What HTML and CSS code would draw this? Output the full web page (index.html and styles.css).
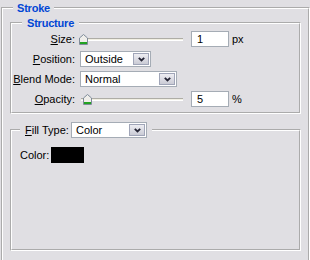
FILE: index.html
```html
<!DOCTYPE html>
<html>
<head>
<meta charset="utf-8">
<link rel="stylesheet" href="styles.css">
</head>
<body>
<fieldset class="group outer">
  <legend class="title">Stroke</legend>
  <fieldset class="group structure">
    <legend class="title">Structure</legend>
    <div class="form">
      <label class="lbl"><u>S</u>ize:</label>
      <div class="ctl">
        <div class="slider">
          <div class="track"></div>
          <svg class="thumb" style="left:-1px" width="9" height="11" viewBox="0 0 9 11"><path d="M0.5 4 L4.5 0.5 L8.5 4 V10.5 H0.5 Z" fill="#efeeea" stroke="#7f8b99"/><rect x="1" y="8" width="7" height="2" fill="#22a322"/></svg>
        </div>
        <div class="input">1</div><span class="unit">px</span>
      </div>

      <label class="lbl"><u>P</u>osition:</label>
      <div class="ctl">
        <div class="select w-pos"><span class="select-text">Outside</span><span class="select-btn"><svg width="7" height="5" viewBox="0 0 7 5"><path d="M0.8 0.8 L3.5 3.5 L6.2 0.8" stroke="#252535" stroke-width="1.8" fill="none"/></svg></span></div>
      </div>

      <label class="lbl"><u>B</u>lend Mode:</label>
      <div class="ctl">
        <div class="select w-blend"><span class="select-text">Normal</span><span class="select-btn"><svg width="7" height="5" viewBox="0 0 7 5"><path d="M0.8 0.8 L3.5 3.5 L6.2 0.8" stroke="#252535" stroke-width="1.8" fill="none"/></svg></span></div>
      </div>

      <label class="lbl"><u>O</u>pacity:</label>
      <div class="ctl">
        <div class="slider">
          <div class="track"></div>
          <svg class="thumb" style="left:3px" width="9" height="11" viewBox="0 0 9 11"><path d="M0.5 4 L4.5 0.5 L8.5 4 V10.5 H0.5 Z" fill="#efeeea" stroke="#7f8b99"/><rect x="1" y="8" width="7" height="2" fill="#22a322"/></svg>
        </div>
        <div class="input">5</div><span class="unit">%</span>
      </div>
    </div>
  </fieldset>

  <fieldset class="group fill">
    <legend class="fill-legend"><span class="fill-head"><span class="fill-lbl"><u>F</u>ill Type:</span><span class="select w-fill"><span class="select-text">Color</span><span class="select-btn"><svg width="7" height="5" viewBox="0 0 7 5"><path d="M0.8 0.8 L3.5 3.5 L6.2 0.8" stroke="#252535" stroke-width="1.8" fill="none"/></svg></span></span></span></legend>
    <div class="color-row"><span>Color:</span><span class="swatch"></span></div>
  </fieldset>
</fieldset>
</body>
</html>
```

FILE: styles.css
```css
html, body {
  margin: 0;
  padding: 0;
  width: 310px;
  height: 260px;
  overflow: hidden;
  background: #e0dfe3;
}

body {
  font-family: "Liberation Sans", Arial, sans-serif;
  font-size: 11px;
  color: #000;
}

.group {
  border: 2px groove #ffffff;
  margin: 0;
  min-width: 0;
}

.group.outer {
  margin: 1px 0 0 1px;
  padding: 1px 7px 0 7px;
  height: 400px;
  box-sizing: border-box;
}

legend.title {
  font-weight: bold;
  color: #0046d5;
  line-height: 14px;
  height: 14px;
  padding: 0 4px;
  margin-left: 3px;
  letter-spacing: -0.2px;
}

.group.structure {
  padding: 1px 0 5px 0;
  margin: 0 0 8px 0;
}

.structure > legend.title {
  margin-left: 10px;
  padding: 0 5px;
}

.form {
  display: grid;
  grid-template-columns: 63px auto;
  column-gap: 5px;
  row-gap: 4px;
  grid-auto-rows: 16px;
  align-items: center;
}

.lbl {
  text-align: right;
  line-height: 16px;
  white-space: nowrap;
}

.ctl {
  display: flex;
  align-items: center;
  height: 16px;
}

.slider {
  position: relative;
  width: 104px;
  height: 16px;
  display: flex;
  align-items: center;
  padding: 0 1px;
  box-sizing: border-box;
}

.track {
  flex: 1;
  height: 1px;
  border-top: 1px solid #aeada6;
  border-bottom: 1px solid #ffffff;
  background: #f1efe2;
}

.thumb {
  position: absolute;
  top: 3px;
  display: block;
}

.input {
  width: 38px;
  height: 16px;
  box-sizing: border-box;
  border: 1px solid #a5acb5;
  background: #fff;
  padding-left: 5px;
  line-height: 14px;
  margin-left: 7px;
}

.unit {
  margin-left: 3px;
}

.select {
  display: flex;
  height: 16px;
  box-sizing: border-box;
  border: 1px solid #a5acb5;
  background: #fff;
}

.w-pos { width: 71px; }
.w-blend { width: 97px; }
.w-fill { width: 76px; }

.select-text {
  flex: 1;
  padding-left: 4px;
  line-height: 14px;
  white-space: nowrap;
  overflow: hidden;
}

.select-btn {
  width: 16px;
  margin: 1px;
  box-sizing: border-box;
  border: 1px solid #a0a5b8;
  background: linear-gradient(#ededf2, #cacbd5);
  display: flex;
  align-items: center;
  justify-content: center;
}

.select-btn svg {
  display: block;
}

.group.fill {
  padding: 9px 8px 86px 8px;
}

.fill-legend {
  padding: 0 5px 0 5px;
  height: 16px;
  line-height: 16px;
}

.fill-head {
  display: flex;
  align-items: center;
  height: 16px;
}

.fill-lbl {
  width: 46px;
  white-space: nowrap;
}

.color-row {
  display: flex;
  align-items: center;
  height: 16px;
  gap: 2px;
}

.swatch {
  width: 33px;
  height: 16px;
  background: #000;
}
```
